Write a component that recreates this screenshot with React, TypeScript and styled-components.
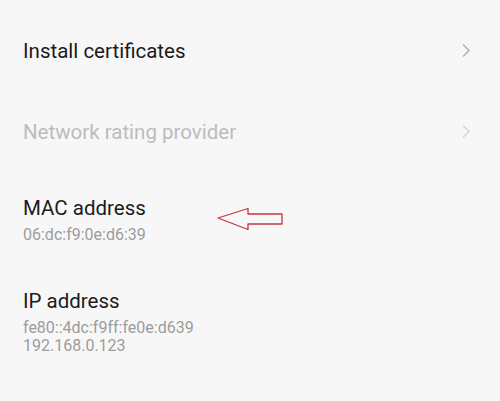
import * as React from 'react';
import styled, { createGlobalStyle } from 'styled-components';

const GlobalStyle = createGlobalStyle`
    html, body {
        margin: 0;
        padding: 0;
        background: #f7f7f7;
    }
    body {
        font-family: Roboto, "Noto Sans", sans-serif;
    }
`;

const Page = styled.div`
    width: 500px;
    height: 401px;
    overflow: hidden;
    background: #f7f7f7;
    padding-top: 10px;
    box-sizing: border-box;
`;
const Row = styled.div<{ $height: number }>`
    display: flex;
    align-items: center;
    height: ${(p) => p.$height}px;
    padding: 0 24px 0 23px;
`;
const TextBlock = styled.div`
    flex: 1;
    display: flex;
    flex-direction: column;
`;
const Title = styled.div<{ $disabled?: boolean }>`
    font-size: 20.5px;
    line-height: 24px;
    color: ${(p) => (p.$disabled ? '#bcbcbc' : '#1b1b1b')};
`;
const Summary = styled.div`
    font-size: 16px;
    line-height: 18px;
    color: #9c9c9c;
    margin-top: 6px;

    & + & {
        margin-top: 0;
    }
`;
const Chevron = styled.svg<{ $faded?: boolean }>`
    width: 10px;
    height: 15px;
    margin-right: 5px;
    margin-bottom: 2px;
    stroke: ${(p) => (p.$faded ? '#d6d6d6' : '#b4b4b4')};
`;
const Pointer = styled.svg`
    width: 70px;
    height: 26px;
    margin-right: 190px;
`;

const Arrow = ({ faded }: { faded?: boolean }) => (
    <Chevron $faded={faded} viewBox="0 0 10 15" fill="none" strokeWidth={1.6}>
        <path d="M2 1.5 L8 7.5 L2 13.5" />
    </Chevron>
);

export default function App() {
    return (
        <Page>
            <GlobalStyle />
            <Row $height={82}>
                <TextBlock>
                    <Title>Install certificates</Title>
                </TextBlock>
                <Arrow />
            </Row>
            <Row $height={80}>
                <TextBlock>
                    <Title $disabled>Network rating provider</Title>
                </TextBlock>
                <Arrow faded />
            </Row>
            <Row $height={96}>
                <TextBlock>
                    <Title>MAC address</Title>
                    <Summary>06:dc:f9:0e:d6:39</Summary>
                </TextBlock>
                <Pointer viewBox="0 0 70 26" fill="none">
                    <path
                        d="M2 11 L32 1.5 L32 7 L66 7 L66 17 L32 17 L32 22.5 Z"
                        stroke="#c8343f"
                        strokeWidth={1.3}
                        strokeLinejoin="round"
                    />
                </Pointer>
            </Row>
            <Row $height={108}>
                <TextBlock>
                    <Title>IP address</Title>
                    <Summary>fe80::4dc:f9ff:fe0e:d639</Summary>
                    <Summary>192.168.0.123</Summary>
                </TextBlock>
            </Row>
        </Page>
    );
}
